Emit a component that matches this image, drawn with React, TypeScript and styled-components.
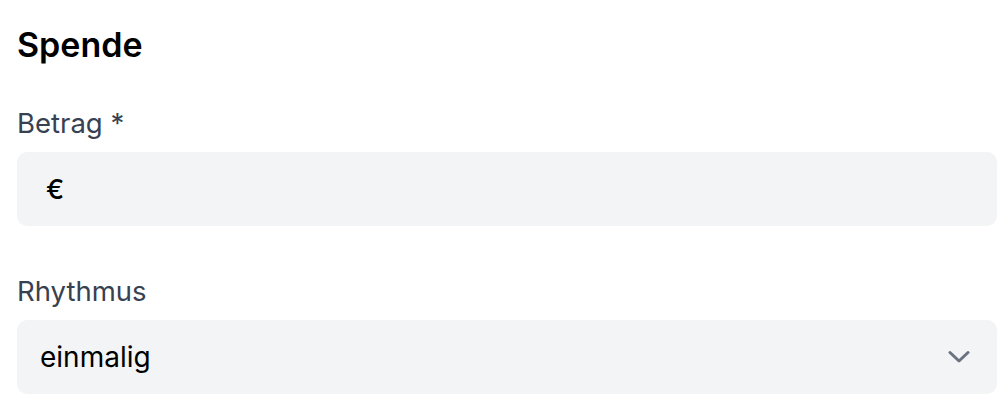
import * as React from "react";
import styled, { createGlobalStyle } from "styled-components";

const GlobalStyle = createGlobalStyle`
  html, body {
    margin: 0;
    padding: 0;
    background: #ffffff;
    font-family: Inter, "Noto Sans", "Liberation Sans", sans-serif;
  }
`;

const Page = styled.div`
  padding: 21px 9px 0 17px;
  display: flex;
  flex-direction: column;
`;

const Title = styled.h2`
  margin: 0 0 34px;
  font-size: 34px;
  line-height: 48px;
  font-weight: 600;
  color: #000000;
`;

const Field = styled.div`
  display: flex;
  flex-direction: column;
  margin-bottom: ${(props: { spaced?: boolean }) => (props.spaced ? "45px" : "0")};
`;

const Label = styled.label`
  font-size: 27.5px;
  line-height: 40px;
  color: #374151;
  margin-bottom: 9px;
`;

const InputBox = styled.div`
  display: flex;
  align-items: center;
  height: 74px;
  border-radius: 10px;
  background: #f3f4f6;
  padding: 0 27px 0 ${(props: { indent: number }) => props.indent}px;
  box-sizing: border-box;
`;

const Prefix = styled.span`
  font-size: 27px;
  color: #000000;
  font-weight: 500;
`;

const Value = styled.span`
  flex: 1;
  font-size: 28px;
  color: #000000;
`;

const Chevron = () => (
  <svg width="22" height="14" viewBox="0 0 22 14" fill="none">
    <path
      d="M2 2.5 L11 11 L20 2.5"
      stroke="#6b7280"
      strokeWidth="3"
      strokeLinecap="round"
      strokeLinejoin="round"
    />
  </svg>
);

export default function App() {
  return (
    <>
      <GlobalStyle />
      <Page>
        <Title>Spende</Title>
        <Field spaced>
          <Label>Betrag *</Label>
          <InputBox indent={29}>
            <Prefix>€</Prefix>
          </InputBox>
        </Field>
        <Field>
          <Label>Rhythmus</Label>
          <InputBox indent={23}>
            <Value>einmalig</Value>
            <Chevron />
          </InputBox>
        </Field>
      </Page>
    </>
  );
}
